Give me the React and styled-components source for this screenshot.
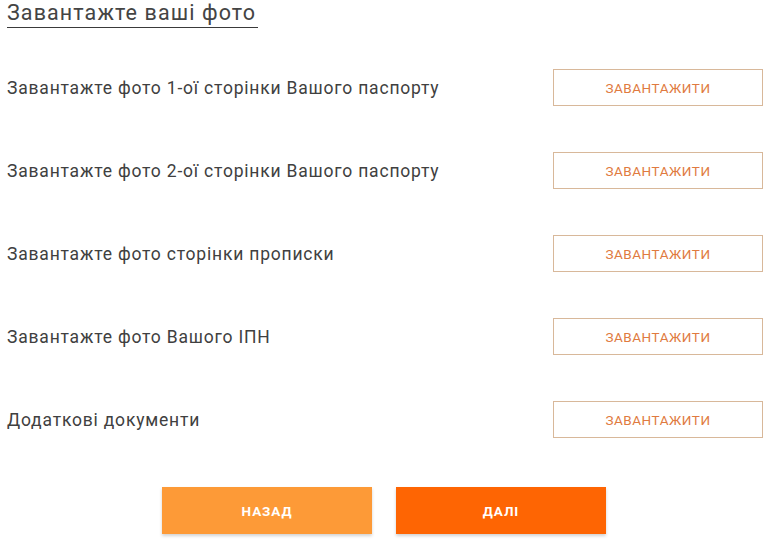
import React from "react";
import styled, { createGlobalStyle } from "styled-components";

const GlobalStyle = createGlobalStyle`
  body {
    margin: 0;
    background: #ffffff;
    font-family: Roboto, "Noto Sans", Arial, sans-serif;
  }
`;

const docs = [
  "Завантажте фото 1-ої сторінки Вашого паспорту",
  "Завантажте фото 2-ої сторінки Вашого паспорту",
  "Завантажте фото сторінки прописки",
  "Завантажте фото Вашого ІПН",
  "Додаткові документи",
];

function App() {
  return (
    <>
      <GlobalStyle />
      <Page>
        <Title>Завантажте ваші фото</Title>
        <List>
          {docs.map((label) => (
            <Row key={label}>
              <Label>{label}</Label>
              <UploadButton type="button">Завантажити</UploadButton>
            </Row>
          ))}
        </List>
        <Actions>
          <NavButton type="button" $tone="#fd9a37">
            Назад
          </NavButton>
          <NavButton type="button" $tone="#fe6503">
            Далі
          </NavButton>
        </Actions>
      </Page>
    </>
  );
}

const Page = styled.div`
  width: 775px;
  height: 539px;
  padding: 0 12px 0 7px;
  box-sizing: border-box;
  overflow: hidden;
`;
const Title = styled.h2`
  display: inline-block;
  margin: 0;
  font-size: 21.5px;
  line-height: 25px;
  font-weight: 400;
  letter-spacing: 1.1px;
  color: #444444;
  padding: 0 2px 2px 0;
  border-bottom: 1.5px solid #3a3a3a;
`;
const List = styled.div`
  display: flex;
  flex-direction: column;
  gap: 46px;
  margin-top: 41px;
`;
const Row = styled.div`
  display: flex;
  align-items: center;
  justify-content: space-between;
  height: 37px;
`;
const Label = styled.span`
  font-size: 17.5px;
  letter-spacing: 0.8px;
  color: #404040;
`;
const UploadButton = styled.button`
  width: 210px;
  height: 37px;
  background: #ffffff;
  border: 1px solid #d8b89a;
  color: #e07a40;
  font-family: Roboto, Arial, sans-serif;
  font-size: 13.5px;
  text-transform: uppercase;
  letter-spacing: 0.55px;
  cursor: pointer;
`;
const Actions = styled.div`
  display: flex;
  gap: 24px;
  margin: 49px 0 0 155px;
`;
const NavButton = styled.button`
  width: 210px;
  height: 47px;
  border: none;
  background: ${(p) => p.$tone};
  color: #ffffff;
  font-family: Roboto, Arial, sans-serif;
  font-size: 13.5px;
  font-weight: 700;
  letter-spacing: 0.9px;
  text-transform: uppercase;
  box-shadow: 0 2px 3px rgba(0, 0, 0, 0.18);
  cursor: pointer;
`;

export default App;
